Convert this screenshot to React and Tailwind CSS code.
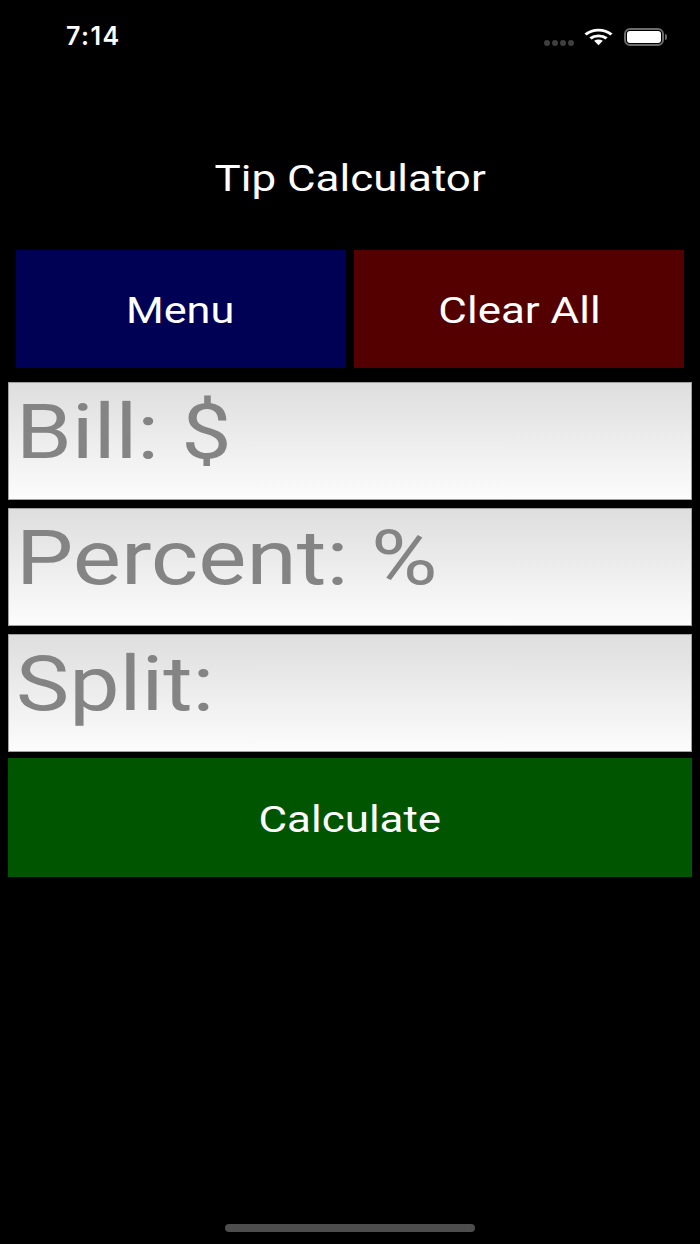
function WifiIcon() {
  return (
    <svg width="29" height="18" viewBox="0 0 28 20" fill="none" preserveAspectRatio="none">
      <path d="M1.5 7.2C8.6 0.8 19.4 0.8 26.5 7.2" stroke="#fff" strokeWidth="3.2" />
      <path d="M6.2 11.6C10.6 7.8 17.4 7.8 21.8 11.6" stroke="#fff" strokeWidth="3.2" />
      <path d="M9.8 14.2C12.2 12.4 15.8 12.4 18.2 14.2L14 19.2Z" fill="#fff" />
    </svg>
  );
}

function BatteryIcon() {
  return (
    <div className="flex items-center">
      <div className="flex h-[18px] w-[40px] items-center justify-center rounded-[6px] border-2 border-[#6b6b6b]">
        <div className="h-[12px] w-[34px] rounded-[3px] bg-white" />
      </div>
      <div className="ml-[1px] h-[6px] w-[2px] rounded-r-sm bg-[#6b6b6b]" />
    </div>
  );
}

function StatusBar() {
  return (
    <div className="flex h-[73px] items-center justify-between pl-[66px] pr-[33px]">
      <span className="font-['Inter',sans-serif] text-[25px] font-semibold leading-none tracking-[1.5px] text-white">7:14</span>
      <div className="flex items-center">
        <div className="mr-[10px] mt-[12px] flex gap-[2px]">
          <span className="h-[6px] w-[6px] rounded-full bg-[#3f3f3f]" />
          <span className="h-[6px] w-[6px] rounded-full bg-[#3f3f3f]" />
          <span className="h-[6px] w-[6px] rounded-full bg-[#3f3f3f]" />
          <span className="h-[6px] w-[6px] rounded-full bg-[#3f3f3f]" />
        </div>
        <WifiIcon />
        <div className="ml-[11px]">
          <BatteryIcon />
        </div>
      </div>
    </div>
  );
}

// the original app stretches its Roboto text sideways, so the labels are scaled on x
function Field({ label, stretch }) {
  return (
    <div className="flex h-[118px] items-start border border-[#a0a0a0] bg-gradient-to-b from-[#dedede] to-[#fcfcfc] pl-[7px]">
      <span className={`relative top-[1px] inline-block origin-left text-[76px] leading-[96px] text-[#848484] ${stretch}`}>{label}</span>
    </div>
  );
}

function ActionButton({ label, className, stretch = "scale-x-[1.22]" }) {
  return (
    <button type="button" className={className}>
      <span className={`relative top-[2px] inline-block text-[36px] text-white ${stretch}`}>{label}</span>
    </button>
  );
}

export default function App() {
  return (
    <div className="flex min-h-[1244px] flex-col bg-black font-['Roboto',sans-serif]">
      <StatusBar />
      <h1 className="mt-[81px] text-center text-[36px] font-normal leading-[48px] text-white">
        <span className="relative top-[1px] inline-block scale-x-[1.22]">Tip Calculator</span>
      </h1>
      <div className="mt-[48px] flex gap-[8px] px-[16px]">
        <ActionButton label="Menu" stretch="-translate-x-[1px] scale-x-[1.2]" className="h-[118px] flex-1 bg-[#000055]" />
        <ActionButton label="Clear All" className="h-[118px] flex-1 bg-[#550000]" />
      </div>
      <div className="mt-[14px] flex flex-col gap-[8px] px-[8px]">
        <Field label="Bill: $" stretch="scale-x-[1.18]" />
        <Field label="Percent: %" stretch="scale-x-[1.195]" />
        <Field label="Split:" stretch="scale-x-[1.18]" />
        <ActionButton label="Calculate" className="-mt-[2px] h-[119px] bg-[#005500]" />
      </div>
      <div className="mt-auto flex justify-center pb-[12px]">
        <div className="h-[8px] w-[250px] rounded-full bg-[#4d4d4d]" />
      </div>
    </div>
  );
}
